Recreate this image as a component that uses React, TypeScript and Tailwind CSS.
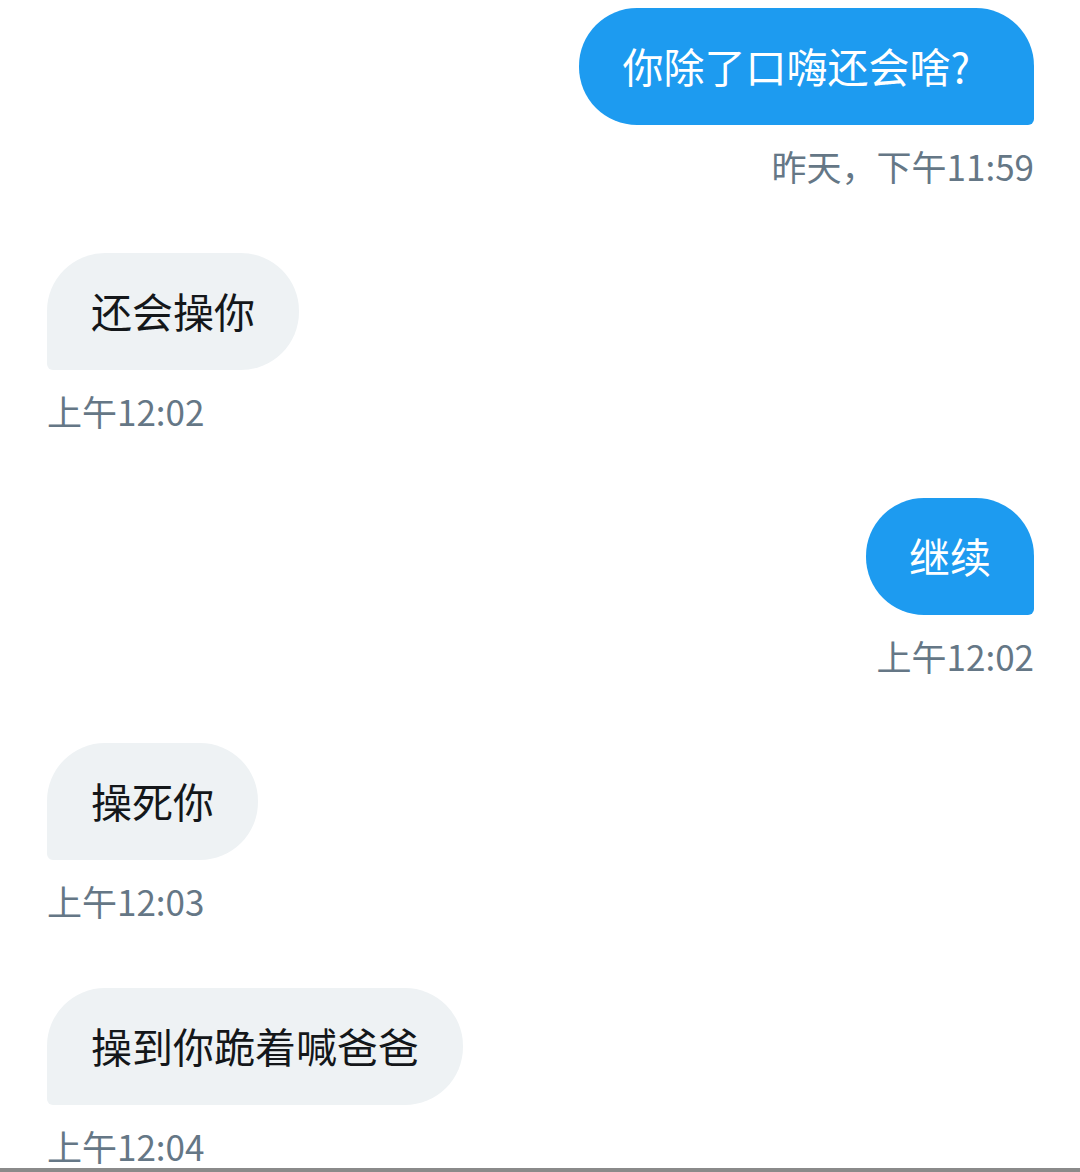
const messages = [
  { id: 1, mine: true, text: "你除了口嗨还会啥?", time: "昨天，下午11:59", pad: "pl-[44px] pr-[64px]" },
  { id: 2, mine: false, text: "还会操你", time: "上午12:02", pad: "px-[44px]" },
  { id: 3, mine: true, text: "继续", time: "上午12:02", pad: "px-[43px]" },
  { id: 4, mine: false, text: "操死你", time: "上午12:03", pad: "px-[44px]" },
  { id: 5, mine: false, text: "操到你跪着喊爸爸", time: "上午12:04", pad: "px-[44px]" },
];

const App = () => {
  return (
    <div
      className="w-[1080px] h-[1172px] bg-white flex flex-col overflow-hidden"
      style={{ fontFamily: '"Noto Sans CJK SC", "Noto Sans", sans-serif' }}
    >
      <div className="flex flex-col px-[46px] pt-[8px] gap-[67px]">
        {messages.map((m) => (
          <div key={m.id} className={m.mine ? "flex flex-col items-end" : "flex flex-col items-start ml-px"}>
            {m.mine ? (
              <div className={"h-[117px] flex items-center pb-[4px] bg-[#1d9bf0] text-white text-[41px] leading-[60px] rounded-[58px] rounded-br-[6px] " + m.pad}>
                {m.text}
              </div>
            ) : (
              <div className={"h-[117px] flex items-center pb-[4px] bg-[#eef2f4] text-[#14171a] text-[41px] leading-[60px] rounded-[58px] rounded-bl-[6px] " + m.pad}>
                {m.text}
              </div>
            )}
            <div className="mt-[21px] h-[40px] leading-[40px] text-[35px] text-[#657786]">{m.time}</div>
          </div>
        ))}
      </div>
      <div className="mt-auto h-[4px] bg-[#8a8a8a]"></div>
    </div>
  );
};

export default App;
